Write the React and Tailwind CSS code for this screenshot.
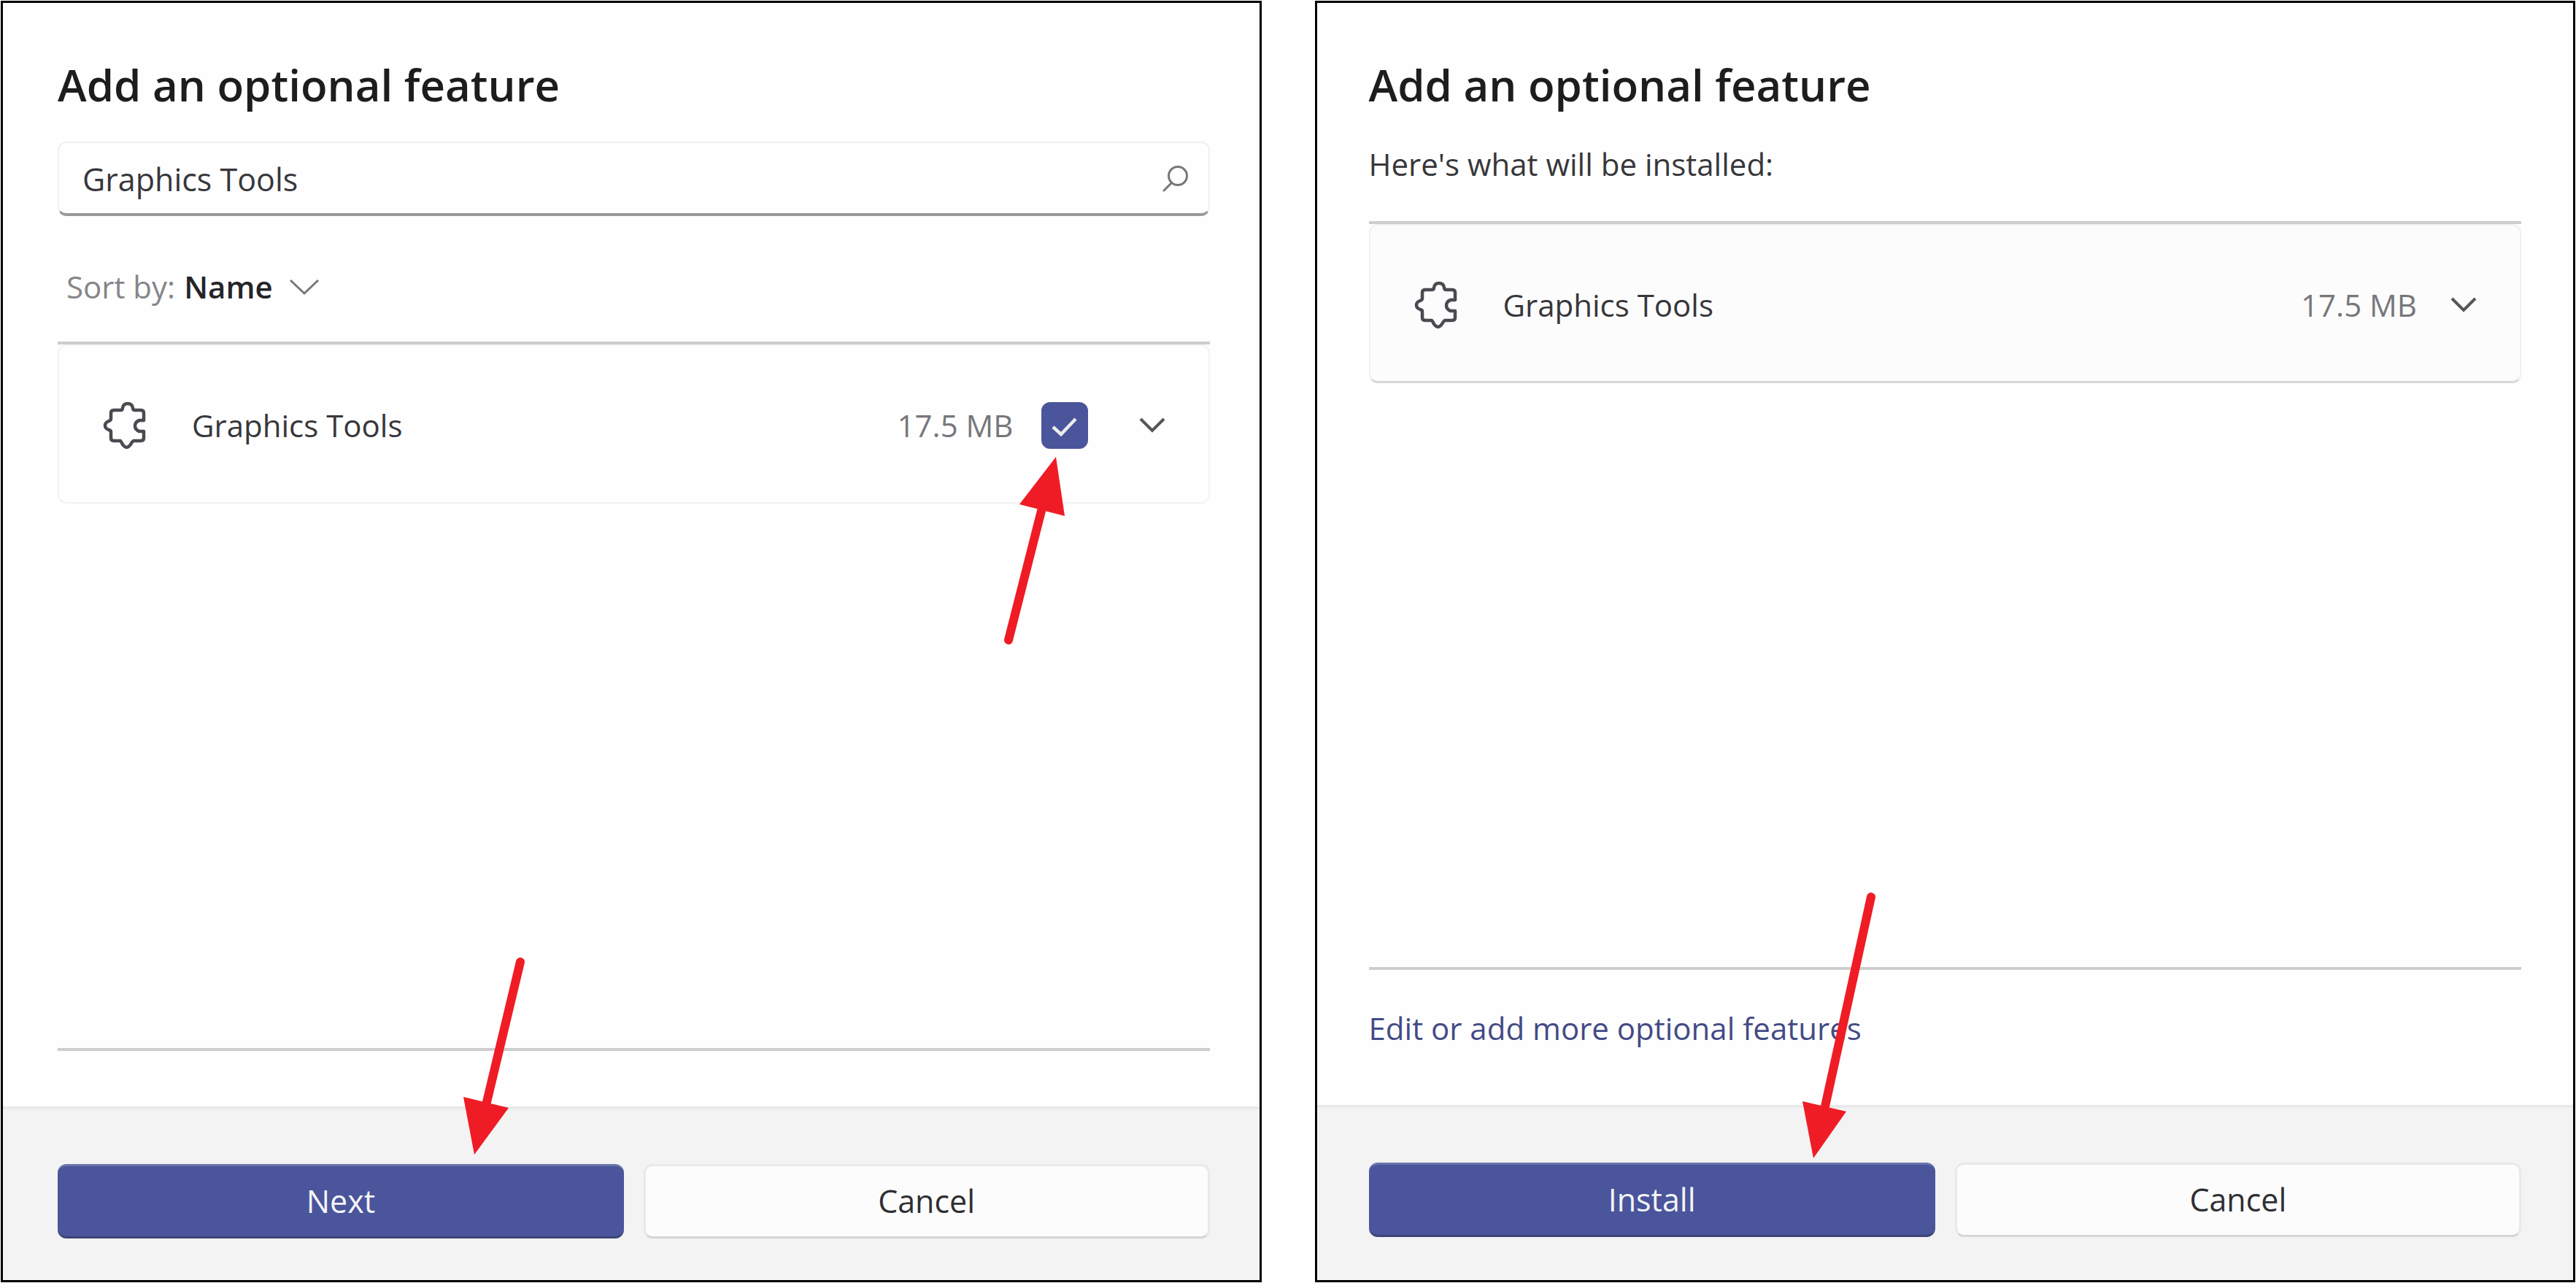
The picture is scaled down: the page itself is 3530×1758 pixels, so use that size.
import React, { useState } from "react";

function PuzzleIcon() {
  return (
    <svg
      className="h-[66px] w-[60px] shrink-0"
      viewBox="0 0 60 66"
      fill="none"
      stroke="#4a4a50"
      strokeWidth="4.5"
      strokeLinejoin="round"
      strokeLinecap="round"
      aria-hidden="true"
    >
      <path d="M15 12H24Q27 12 27 9Q28 3 34 3Q40 3 41 9Q41 12 44 12H52Q56 12 56 16V26H50Q44 28 44 33.500Q44 39 50 41H56V50Q56 54 52 54H42Q40 55 38 59Q35 63 32.500 63Q30 63 27 59Q25 55 24 54H15Q11 54 11 50V41Q11 40 8 39Q3 37 3 33Q3 29 8 27Q11 26 11 24V16Q11 12 15 12Z" />
    </svg>
  );
}

function SearchIcon() {
  return (
    <svg className="size-10" viewBox="0 0 40 40" fill="none" stroke="#77777b" strokeWidth="3" strokeLinecap="round" aria-hidden="true">
      <circle cx="22" cy="16" r="12.5" />
      <path d="M13 26L3 36" />
    </svg>
  );
}

function ExpandButton() {
  return (
    <button type="button" aria-label="Show details" className="shrink-0">
      <svg className="h-[22px] w-9" viewBox="0 0 36 22" fill="none" stroke="#55555a" strokeWidth="4" aria-hidden="true">
        <path d="M2 2L18 18L34 2" />
      </svg>
    </button>
  );
}

function Divider() {
  return <hr className="h-1 shrink-0 border-0 bg-[#cdcdcd]" />;
}

function CheckboxArrow() {
  return (
    <svg className="pointer-events-none absolute top-[69px] -left-[58px] h-[270px] w-[100px]" viewBox="0 0 100 270" aria-hidden="true">
      <path d="M13 257L58 80" stroke="#ef1c25" strokeWidth="12" strokeLinecap="round" />
      <path d="M78 6L28 71L90 87Z" fill="#ef1c25" />
    </svg>
  );
}

function NextArrow() {
  return (
    <svg className="pointer-events-none absolute -top-[290px] right-[126px] h-[280px] w-[100px]" viewBox="0 0 100 280" aria-hidden="true">
      <path d="M84 13L38 205" stroke="#ef1c25" strokeWidth="12" strokeLinecap="round" />
      <path d="M21 277L6 198L68 213Z" fill="#ef1c25" />
    </svg>
  );
}

function InstallArrow() {
  return (
    <svg className="pointer-events-none absolute -top-[377px] right-[73px] h-[375px] w-[120px]" viewBox="0 0 120 375" aria-hidden="true">
      <path d="M105 13L42 300" stroke="#ef1c25" strokeWidth="12" strokeLinecap="round" />
      <path d="M26 371L11 293L71 307Z" fill="#ef1c25" />
    </svg>
  );
}

function Dialog({ title, children, footer, className, footerClassName }) {
  return (
    <section className="flex flex-1 flex-col border-[3px] border-black bg-[#fefefe]">
      <div className={`flex flex-1 flex-col pt-[72px] ${className}`}>
        <h1 className="text-[60px] leading-[80px] font-semibold text-[#1d1d20]">{title}</h1>
        {children}
      </div>
      <footer
        className={`grid grid-cols-2 gap-[27px] border-t-4 border-[#e9e9e9] bg-[#f3f3f3] pt-[75px] ${className} ${footerClassName}`}
      >
        {footer}
      </footer>
    </section>
  );
}

function FooterButtons({ primary, arrow }) {
  return (
    <>
      <div className="relative">
        <button
          type="button"
          className="block h-[102px] w-full rounded-xl border-y-[3px] border-t-[#6a74ae] border-b-[#3c4479] bg-[#4a559b] text-[43px] text-[#f4f4f6]"
        >
          {primary}
        </button>
        {arrow}
      </div>
      <button
        type="button"
        className="h-[102px] rounded-xl border-[3px] border-[#e9e9e9] border-b-[#d6d6d6] bg-[#fcfcfc] text-[43px] text-[#2f2f33]"
      >
        Cancel
      </button>
    </>
  );
}

export default function App() {
  const [query, setQuery] = useState("Graphics Tools");
  const [selected, setSelected] = useState(true);

  return (
    <main className="flex min-h-screen gap-[73px] bg-white p-px font-['Open_Sans','Noto_Sans',sans-serif] text-[42px] leading-[60px] text-[#37373b]">
      <Dialog
        title="Add an optional feature"
        className="pr-[68px] pl-[75px]"
        footerClassName="pb-[57px]"
        footer={<FooterButtons primary="Next" arrow={<NextArrow />} />}
      >
        <div className="mt-[38px] flex h-[102px] items-center rounded-xl border-2 border-b-4 border-[#f0f0f0] border-b-[#9a9a9a] pt-[2px] pr-6 pl-8">
          <input
            type="text"
            aria-label="Search features"
            value={query}
            onChange={(e) => setQuery(e.target.value)}
            className="h-16 min-w-0 flex-1 bg-transparent text-[43px] outline-none"
          />
          <SearchIcon />
        </div>

        <div className="mt-[67px] mb-[45px] flex items-center gap-3 pl-3">
          <label htmlFor="sort" className="text-[#85858a]">
            Sort by:
          </label>
          <div className="relative flex items-center">
            <select id="sort" className="appearance-none bg-transparent pr-16 font-semibold text-[#242428] outline-none">
              <option>Name</option>
            </select>
            <svg
              className="pointer-events-none absolute right-0 h-6 w-[42px]"
              viewBox="0 0 42 24"
              fill="none"
              stroke="#77777b"
              strokeWidth="3"
              aria-hidden="true"
            >
              <path d="M2 3L21 21L40 3" />
            </svg>
          </div>
        </div>

        <Divider />
        <div className="flex h-[218px] items-center rounded-xl border-2 border-[#f2f2f2] pt-1 pr-[59px] pl-[60px]">
          <PuzzleIcon />
          <label htmlFor="feature" className="ml-[62px] flex-1">
            Graphics Tools
          </label>
          <span className="text-[#77777b]">17.5 MB</span>
          <div className="relative mr-[70px] ml-[38px] size-16 shrink-0">
            <input
              id="feature"
              type="checkbox"
              checked={selected}
              onChange={(e) => setSelected(e.target.checked)}
              className="block size-16 appearance-none rounded-xl border-2 border-[#4a559b] checked:bg-[#4a559b]"
            />
            {selected && (
              <svg
                className="pointer-events-none absolute inset-0 size-16"
                viewBox="0 0 64 64"
                fill="none"
                stroke="#ececec"
                strokeWidth="4.5"
                aria-hidden="true"
              >
                <path d="M16 34L27 44L47 23" />
              </svg>
            )}
            <CheckboxArrow />
          </div>
          <ExpandButton />
        </div>

        <div className="mt-auto mb-[76px]">
          <Divider />
        </div>
      </Dialog>

      <Dialog
        title="Add an optional feature"
        className="pr-[71px] pl-[71px]"
        footerClassName="pb-[59px]"
        footer={<FooterButtons primary="Install" arrow={<InstallArrow />} />}
      >
        <p className="mt-[39px] mb-12">Here's what will be installed:</p>

        <Divider />
        <div className="flex h-[218px] items-center rounded-xl border-2 border-b-[3px] border-[#f0f0f0] border-b-[#d8d8d8] bg-[#fcfcfc] pt-1 pr-[59px] pl-[60px]">
          <PuzzleIcon />
          <span className="ml-[62px] flex-1">Graphics Tools</span>
          <span className="mr-[46px] text-[#77777b]">17.5 MB</span>
          <ExpandButton />
        </div>

        <div className="mt-auto mb-[75px]">
          <Divider />
          <a href="#features" className="mt-[50px] block text-[#434b85]">
            Edit or add more optional features
          </a>
        </div>
      </Dialog>
    </main>
  );
}
